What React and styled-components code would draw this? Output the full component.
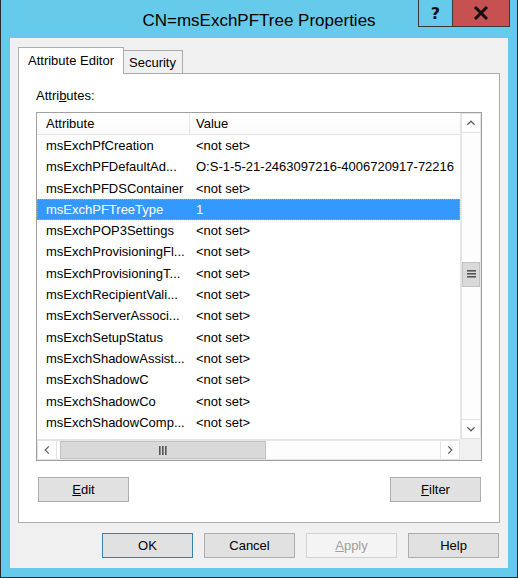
import React from 'react'
import styled, { createGlobalStyle } from 'styled-components'

const GlobalStyle = createGlobalStyle`
  body {
    margin: 0;
    font-family: 'Liberation Sans', Arial, sans-serif;
    background: #ffffff;
  }
`

const rows = [
  ['msExchPfCreation', '<not set>'],
  ['msExchPFDefaultAd...', 'O:S-1-5-21-2463097216-4006720917-72216'],
  ['msExchPFDSContainer', '<not set>'],
  ['msExchPFTreeType', '1', true],
  ['msExchPOP3Settings', '<not set>'],
  ['msExchProvisioningFl...', '<not set>'],
  ['msExchProvisioningT...', '<not set>'],
  ['msExchRecipientVali...', '<not set>'],
  ['msExchServerAssoci...', '<not set>'],
  ['msExchSetupStatus', '<not set>'],
  ['msExchShadowAssist...', '<not set>'],
  ['msExchShadowC', '<not set>'],
  ['msExchShadowCo', '<not set>'],
  ['msExchShadowComp...', '<not set>'],
]

const Chevron = ({ dir }) => {
  const points = {
    up: '6,12 10,8 14,12',
    down: '6,8 10,12 14,8',
    left: '12,6 8,10 12,14',
    right: '8,6 12,10 8,14',
  }
  return (
    <svg width='20' height='20' viewBox='0 0 20 20'>
      <polyline points={points[dir]} fill='none' stroke='#606060' strokeWidth='1.4' />
    </svg>
  )
}

const Grip = ({ vertical }) => (
  <svg width='9' height='9' viewBox='0 0 9 9'>
    {[1, 4, 7].map(p =>
      vertical ? (
        <rect key={p} x='0' y={p - 1} width='9' height='1.6' fill='#555' />
      ) : (
        <rect key={p} x={p - 1} y='0' width='1.6' height='9' fill='#555' />
      )
    )}
  </svg>
)

const App = () => {
  return (
    <>
      <GlobalStyle />
      <Window>
        <TitleBar>
          <span />
          <Title>CN=msExchPFTree Properties</Title>
          <CaptionButtons>
            <HelpButton>?</HelpButton>
            <CloseButton>
              <svg width='16' height='14' viewBox='0 0 16 14'>
                <path d='M2 1 L14 13 M14 1 L2 13' stroke='#111' strokeWidth='3' />
              </svg>
            </CloseButton>
          </CaptionButtons>
        </TitleBar>
        <Client>
          <TabStrip>
            <Tab $active>Attribute Editor</Tab>
            <Tab>Security</Tab>
          </TabStrip>
          <Panel>
            <Label>
              Attri<u>b</u>utes:
            </Label>
            <ListBox>
              <Viewport>
                <HeaderRow>
                  <HeaderCell $first>Attribute</HeaderCell>
                  <HeaderCell>Value</HeaderCell>
                </HeaderRow>
                {rows.map(([name, value, selected]) => (
                  <Row key={name} $selected={selected}>
                    <NameCell>{name}</NameCell>
                    <ValueCell>{value}</ValueCell>
                  </Row>
                ))}
              </Viewport>
              <VScroll>
                <ArrowBox>
                  <Chevron dir='up' />
                </ArrowBox>
                <VTrack>
                  <VThumb $offset={129}>
                    <Grip vertical />
                  </VThumb>
                </VTrack>
                <ArrowBox>
                  <Chevron dir='down' />
                </ArrowBox>
              </VScroll>
              <HScroll>
                <ArrowBox>
                  <Chevron dir='left' />
                </ArrowBox>
                <HTrack>
                  <HThumb>
                    <Grip />
                  </HThumb>
                </HTrack>
                <ArrowBox>
                  <Chevron dir='right' />
                </ArrowBox>
              </HScroll>
              <Corner />
            </ListBox>
            <PanelButtons>
              <Button>
                <u>E</u>dit
              </Button>
              <Button>
                <u>F</u>ilter
              </Button>
            </PanelButtons>
          </Panel>
          <DialogButtons>
            <Button $default>OK</Button>
            <Button>Cancel</Button>
            <Button disabled>
              <u>A</u>pply
            </Button>
            <Button>Help</Button>
          </DialogButtons>
        </Client>
      </Window>
    </>
  )
}

const Window = styled.div`
  width: 518px;
  height: 578px;
  box-sizing: border-box;
  background: #66cbea;
  border: 1px solid #2b2b2b;
  border-top: none;
  display: flex;
  flex-direction: column;
`

const TitleBar = styled.div`
  height: 38px;
  flex-shrink: 0;
  display: grid;
  grid-template-columns: 1fr auto 1fr;
`

const Title = styled.div`
  margin-top: 10px;
  line-height: 22px;
  font-size: 17px;
  color: #000;
  white-space: nowrap;
  align-self: start;
`

const CaptionButtons = styled.div`
  justify-self: end;
  align-self: start;
  margin-right: 7px;
  display: flex;
  height: 27px;
  border: 1px solid #3a3a3a;
  border-top: none;
  box-sizing: border-box;
`

const HelpButton = styled.div`
  width: 33px;
  border-right: 1px solid #3a3a3a;
  display: flex;
  align-items: center;
  justify-content: center;
  font-family: 'DejaVu Sans', sans-serif;
  font-weight: bold;
  font-size: 16px;
  color: #111;
`

const CloseButton = styled.div`
  width: 56px;
  background: #c75050;
  display: flex;
  align-items: center;
  justify-content: center;
`

const Client = styled.div`
  flex: 1;
  margin: 0 9px 9px 9px;
  background: #f0f0f0;
  padding: 9px 8px 10px 8px;
  display: flex;
  flex-direction: column;
  min-height: 0;
`

const TabStrip = styled.div`
  display: flex;
  align-items: flex-end;
  height: 27px;
  margin-bottom: -1px;
  position: relative;
  z-index: 1;
`

const Tab = styled.div`
  box-sizing: border-box;
  border: 1px solid #acacac;
  border-bottom: none;
  font-size: 13px;
  color: #000;
  display: flex;
  align-items: center;
  height: ${p => (p.$active ? '27px' : '23px')};
  margin-bottom: ${p => (p.$active ? '0' : '1px')};
  padding: ${p => (p.$active ? '0 9px 2px 9px' : '0 6px 0 5px')};
  background: ${p => (p.$active ? '#ffffff' : '#f0f0f0')};
  ${p => (p.$active ? '' : 'border-left: none;')}
`

const Panel = styled.div`
  flex: 1;
  background: #ffffff;
  border: 1px solid #acacac;
  padding: 14px 17px 0 17px;
  display: flex;
  flex-direction: column;
  min-height: 0;
`

const Label = styled.div`
  font-size: 13px;
  line-height: 16px;
  margin-bottom: 8px;
  color: #000;
`

const ListBox = styled.div`
  height: 349px;
  box-sizing: border-box;
  border: 1px solid #a0a0a0;
  display: grid;
  grid-template-columns: 1fr 21px;
  grid-template-rows: 1fr 21px;
  background: #ffffff;
`

const Viewport = styled.div`
  overflow: hidden;
  min-width: 0;
`

const HeaderRow = styled.div`
  display: flex;
  height: 22px;
  box-sizing: border-box;
  border-bottom: 1px solid #e5e5e5;
  background: linear-gradient(#ffffff, #fafafa);
`

const HeaderCell = styled.div`
  font-size: 13px;
  line-height: 21px;
  color: #000;
  box-sizing: border-box;
  ${p =>
    p.$first
      ? 'width: 153px; padding-left: 9px; border-right: 1px solid #e5e5e5;'
      : 'flex: 1; padding-left: 6px;'}
`

const Row = styled.div`
  display: flex;
  height: 21.3px;
  line-height: 21.3px;
  font-size: 13px;
  white-space: nowrap;
  box-sizing: border-box;
  color: ${p => (p.$selected ? '#ffffff' : '#000000')};
  background: ${p => (p.$selected ? '#3399ff' : 'transparent')};
  outline: ${p => (p.$selected ? '1px dotted #d89a4c' : 'none')};
  outline-offset: -1px;
`

const NameCell = styled.div`
  width: 153px;
  flex-shrink: 0;
  padding-left: 9px;
  box-sizing: border-box;
  overflow: hidden;
`

const ValueCell = styled.div`
  padding-left: 6px;
`

const VScroll = styled.div`
  display: flex;
  flex-direction: column;
  background: #fdfdfd;
  border-left: 1px solid #e4e4e4;
`

const ArrowBox = styled.div`
  width: 20px;
  height: 20px;
  flex-shrink: 0;
  background: #ffffff;
  border: 1px solid #e3e3e3;
  box-sizing: border-box;
  display: flex;
  align-items: center;
  justify-content: center;
`

const VTrack = styled.div`
  flex: 1;
  border-left: 1px solid #e6e6e6;
  border-right: 1px solid #e6e6e6;
`

const VThumb = styled.div`
  margin-top: ${p => p.$offset}px;
  height: 25px;
  background: #d9d9d9;
  border: 1px solid #c2c2c2;
  box-sizing: border-box;
  display: flex;
  align-items: center;
  justify-content: center;
`

const HScroll = styled.div`
  display: flex;
  background: #fdfdfd;
  border-top: 1px solid #e4e4e4;
`

const HTrack = styled.div`
  flex: 1;
  display: flex;
  border-top: 1px solid #e6e6e6;
  border-bottom: 1px solid #e6e6e6;
`

const HThumb = styled.div`
  margin-left: 3px;
  width: 206px;
  background: #d9d9d9;
  border: 1px solid #c2c2c2;
  box-sizing: border-box;
  display: flex;
  align-items: center;
  justify-content: center;
`

const Corner = styled.div`
  background: #f0f0f0;
`

const PanelButtons = styled.div`
  display: flex;
  justify-content: space-between;
  margin-top: 16px;
  padding: 0 1px 0 2px;
`

const Button = styled.button`
  width: 91px;
  height: 25px;
  box-sizing: border-box;
  font-family: 'Liberation Sans', Arial, sans-serif;
  font-size: 13px;
  padding: 0;
  color: #000;
  background: #e1e1e1;
  border: 1px solid ${p => (p.$default ? '#3c7fb1' : '#adadad')};
  &:disabled {
    color: #a0a0a0;
    background: #f4f4f4;
    border-color: #d2d2d2;
  }
`

const DialogButtons = styled.div`
  display: flex;
  justify-content: flex-end;
  gap: 11px;
  margin-top: 10px;
  padding-right: 1px;
`

export default App
